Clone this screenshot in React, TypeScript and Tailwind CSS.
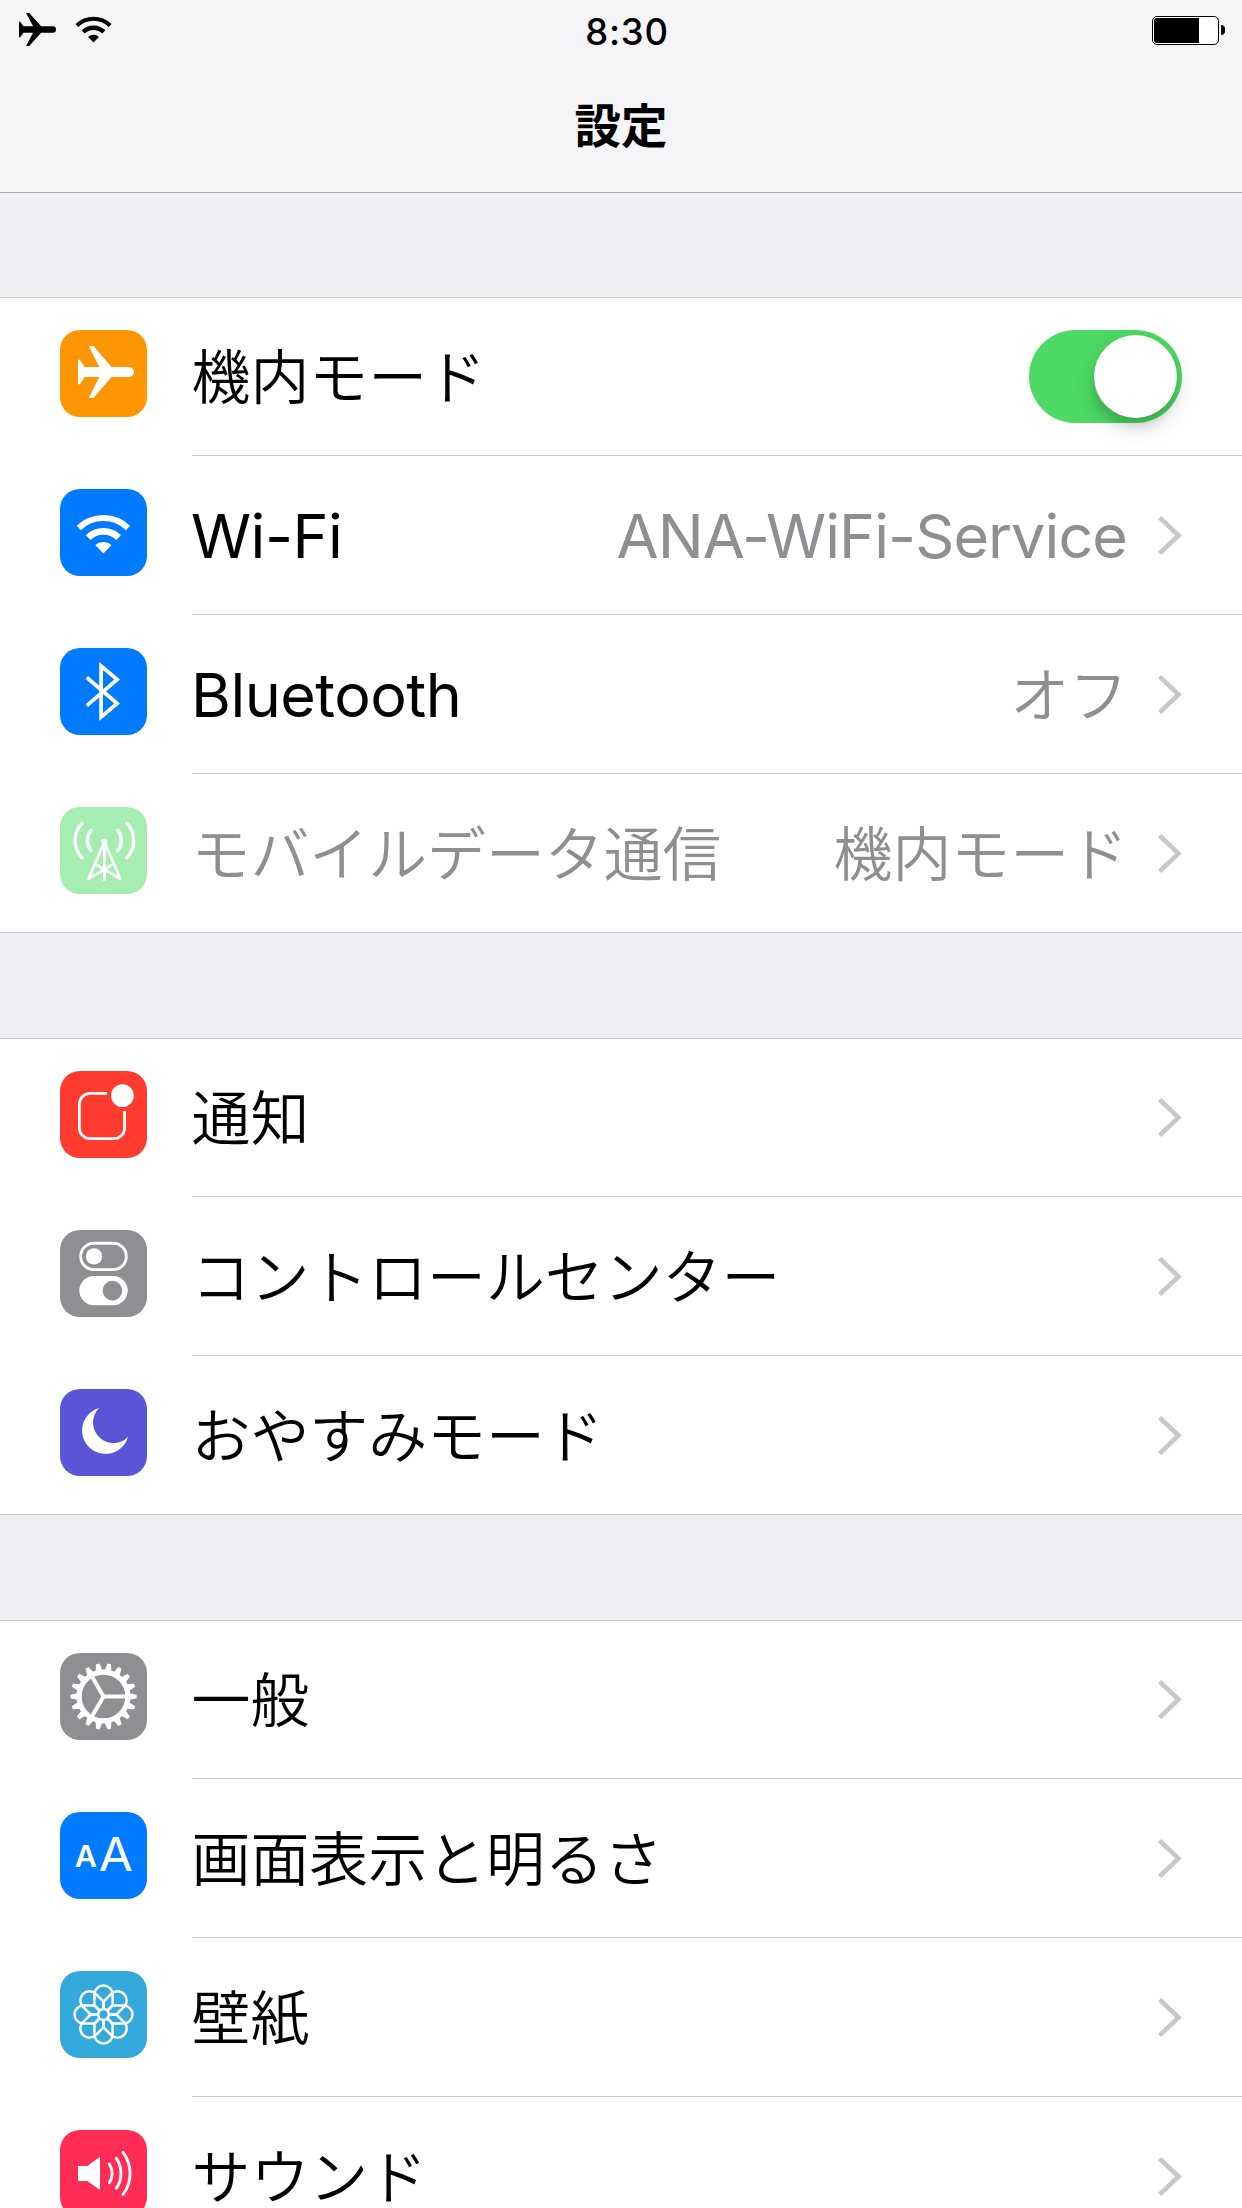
import type { ReactNode } from 'react';

type Row = {
    icon: ReactNode;
    color: string;
    label: string;
    value?: string;
    toggle?: boolean;
    disabled?: boolean;
};

function PlaneShape() {
    return (
        <path d="M18 29.7h1.8l4.9 7.3h14.6L28.7 16h4.8l18 21H69a5 5 0 0 1 0 10H51.5l-18 21h-4.8l10.6-21H24.7l-4.9 7.3H18z" />
    );
}

function WifiShape() {
    return (
        <>
            <path d="M18.8 39a35.3 35.3 0 0 1 49.2 0" fill="none" stroke="currentColor" strokeWidth="6" />
            <path d="M28.1 48.6a22 22 0 0 1 30.6 0" fill="none" stroke="currentColor" strokeWidth="6.6" />
            <path d="M43.4 64.4L35.4 56.2a11.3 11.3 0 0 1 16 0z" />
        </>
    );
}

function BluetoothShape() {
    return (
        <path
            d="M26.8 29.5L57.2 55.5L41.1 69V18L57.2 31.5L26.8 57.7"
            fill="none"
            stroke="currentColor"
            strokeWidth="3.7"
        />
    );
}

function AntennaShape() {
    return (
        <g fill="none" stroke="currentColor" strokeWidth="3.4" strokeLinecap="round">
            <path d="M22 16.2a25 25 0 0 0 0 34.6M66.8 16.2a25 25 0 0 1 0 34.6" />
            <path d="M30.9 23.4a16.5 16.5 0 0 0 0 20.2M57.9 23.4a16.5 16.5 0 0 1 0 20.2" />
            <path d="M44.4 35L28.5 71.8M44.4 35l15.9 36.8M36.8 57.8l23.5 14M52 57.8L28.5 71.8" strokeWidth="2.7" />
            <path d="M44.4 35v38.8" strokeWidth="2.9" strokeLinecap="butt" />
            <circle cx="44.4" cy="34.8" r="3" fill="currentColor" stroke="none" />
        </g>
    );
}

function NotificationShape() {
    return (
        <>
            <path
                d="M47 22.4H30a10.6 10.6 0 0 0-10.6 10.6V57a10.6 10.6 0 0 0 10.6 10.6H54A10.6 10.6 0 0 0 64.6 57V40"
                fill="none"
                stroke="currentColor"
                strokeWidth="2.8"
            />
            <circle cx="62.4" cy="24.6" r="11.4" />
        </>
    );
}

function ControlShape() {
    return (
        <>
            <rect x="20.7" y="13.2" width="45.6" height="26.4" rx="13.2" fill="none" stroke="currentColor" strokeWidth="2.9" />
            <circle cx="34" cy="26.4" r="8.2" />
            <rect x="19.3" y="46" width="48.4" height="29.2" rx="14.6" />
            <circle cx="52.4" cy="60.6" r="9.8" fill="#8e8e93" />
        </>
    );
}

function MoonShape() {
    return <path d="M39 19A23.4 23.4 0 1 0 68 48A20.4 20.4 0 0 1 39 19z" />;
}

function GearShape() {
    const teeth = Array.from({ length: 18 }, (_, i) => i * 20);
    return (
        <>
            <circle cx="43.5" cy="43.5" r="24.4" fill="none" stroke="currentColor" strokeWidth="5.2" />
            {teeth.map((a) => (
                <path key={a} d="M69 40L76.6 41.7v3.6L69 47z" transform={`rotate(${a} 43.5 43.5)`} />
            ))}
            {[0, 120, 240].map((a) => (
                <path key={a} d="M42.5 41.5H67v4H42.5z" transform={`rotate(${a} 43.5 43.5)`} />
            ))}
        </>
    );
}

function TextSizeShape() {
    return (
        <g className="font-['Inter',sans-serif]">
            <text x="25.8" y="55" textAnchor="middle" fontSize="30.5" fontWeight="600">A</text>
            <text x="55.8" y="59" textAnchor="middle" fontSize="46.5" fontWeight="400" textLength="34" lengthAdjust="spacingAndGlyphs">A</text>
        </g>
    );
}

function FlowerShape() {
    const petals = Array.from({ length: 8 }, (_, i) => i * 45);
    return (
        <g fill="none" stroke="currentColor" strokeWidth="2.5">
            {petals.map((a) => (
                <path key={a} d="M40 40L34.4 34.4V23.6a9.1 9.1 0 0 1 18.2 0V34.4L47 40" transform={`rotate(${a} 43.5 43.5)`} />
            ))}
            <circle cx="43.5" cy="43.5" r="5.4" />
        </g>
    );
}

function SpeakerShape() {
    return (
        <>
            <path d="M18 36h9.3L40 26.7V60L27.3 51H18z" />
            <g fill="none" stroke="currentColor" strokeWidth="2.9" strokeLinecap="round">
                <path d="M49.3 34a17 17 0 0 1 0 18.8" />
                <path d="M56.3 28.4a26.5 26.5 0 0 1 0 30" />
                <path d="M63 22.3a35 35 0 0 1 0 42.2" />
            </g>
        </>
    );
}

const groups: Row[][] = [
    [
        { icon: <PlaneShape />, color: 'bg-[#ff9500]', label: '機内モード', toggle: true },
        { icon: <WifiShape />, color: 'bg-[#007aff]', label: 'Wi-Fi', value: 'ANA-WiFi-Service' },
        { icon: <BluetoothShape />, color: 'bg-[#007aff]', label: 'Bluetooth', value: 'オフ' },
        { icon: <AntennaShape />, color: 'bg-[#a6edb1]', label: 'モバイルデータ通信', value: '機内モード', disabled: true },
    ],
    [
        { icon: <NotificationShape />, color: 'bg-[#ff3b30]', label: '通知' },
        { icon: <ControlShape />, color: 'bg-[#8e8e93]', label: 'コントロールセンター' },
        { icon: <MoonShape />, color: 'bg-[#5856d6]', label: 'おやすみモード' },
    ],
    [
        { icon: <GearShape />, color: 'bg-[#8e8e93]', label: '一般' },
        { icon: <TextSizeShape />, color: 'bg-[#007aff]', label: '画面表示と明るさ' },
        { icon: <FlowerShape />, color: 'bg-[#34aadc]', label: '壁紙' },
        { icon: <SpeakerShape />, color: 'bg-[#ff2d55]', label: 'サウンド' },
    ],
];

const isLatin = (text: string) => /^[\x20-\x7e]+$/.test(text);

// Latin and Japanese runs need different faces, sizes and baselines
function Label({ text, latinClass }: { text: string; latinClass: string }) {
    if (isLatin(text)) {
        return (
            <span className={`pt-0.5 font-['Inter',sans-serif] text-[61px] leading-none ${latinClass}`}>{text}</span>
        );
    }
    return (
        <span className="-mr-px -ml-[0.5px] pb-[5px] font-['Noto_Sans_CJK_JP',sans-serif] text-[58.9px] leading-[59px] font-[350]">
            {text}
        </span>
    );
}

function Toggle() {
    return (
        <div className="flex h-[93px] w-[153px] justify-end rounded-full bg-[#4cd964] p-[5px]">
            <div className="h-[83px] w-[83px] rounded-full bg-white shadow-[0_9px_24px_rgba(0,0,0,0.15),0_9px_8px_rgba(0,0,0,0.1)]" />
        </div>
    );
}

function SettingsRow({ row, last }: { row: Row; last: boolean }) {
    return (
        <div className="flex h-[159px]">
            <div className="w-48 shrink-0 pt-[33px] pl-[60px]">
                <div className={`h-[87px] w-[87px] rounded-[20px] text-white ${row.color}`}>
                    <svg viewBox="0 0 87 87" className="block h-full w-full" fill="currentColor">
                        {row.icon}
                    </svg>
                </div>
            </div>
            <div
                className={`flex flex-1 items-center border-b pr-[60px] ${last ? 'border-transparent' : 'border-[#c8c7cc]'} ${row.disabled ? 'text-[#8f8f8f]' : 'text-black'
                    }`}
            >
                <Label text={row.label} latinClass="-ml-px tracking-[-0.5px]" />
                <div className={`ml-auto flex items-center ${row.disabled ? '' : 'text-[#8e8e93]'}`}>
                    {row.value && <Label text={row.value} latinClass="tracking-[-0.9px]" />}
                    {row.toggle ? (
                        <Toggle />
                    ) : (
                        <svg viewBox="0 0 24 39" className="ml-[31px] h-[39px] w-6 text-[#c7c7cc]" fill="none">
                            <path d="M1.6 1.6L20.5 19.5L1.6 37.4" stroke="currentColor" strokeWidth="4.6" />
                        </svg>
                    )}
                </div>
            </div>
        </div>
    );
}

export default function App() {
    return (
        <div className="h-[2208px] w-[1242px] overflow-hidden bg-[#efeff4] text-black">
            <header className="h-[193px] border-b border-[#a7a7ab] bg-[#f5f5f7]">
                <div className="flex h-[60px] items-center justify-between pr-[17px] pl-[19px]">
                    <div className="flex w-[73px] items-center gap-[19px]">
                        <svg viewBox="18 16 56 52" preserveAspectRatio="none" className="-mt-px h-[33px] w-[37px] shrink-0" fill="currentColor">
                            <PlaneShape />
                        </svg>
                        <svg viewBox="16 25.5 54.8 39" className="-mt-px h-[27px] w-[37px] shrink-0" fill="currentColor">
                            <WifiShape />
                        </svg>
                    </div>
                    <div className="pt-1 pl-2.5 font-['Inter',sans-serif] text-[36.5px] leading-none font-medium tracking-[0.8px]">
                        8:30
                    </div>
                    <div className="flex w-[73px] items-center gap-0.5">
                        <div className="h-[29px] w-[67px] rounded-[5px] border border-black bg-white p-px">
                            <div className="h-full w-[45px] rounded-l-[3px] bg-black" />
                        </div>
                        <div className="h-2.5 w-1 rounded-r-full bg-black" />
                    </div>
                </div>
                <h1 className="mt-10 text-center font-['Noto_Sans_CJK_JP',sans-serif] text-[46.5px] leading-none font-bold">
                    設定
                </h1>
            </header>
            <main className="flex flex-col gap-[105px] pt-[104px]">
                {groups.map((rows, i) => (
                    <section key={i} className="bg-white shadow-[inset_0_1px_0_#c8c7cc,inset_0_-1px_0_#c8c7cc]">
                        {rows.map((row, j) => (
                            <SettingsRow key={row.label} row={row} last={j === rows.length - 1} />
                        ))}
                    </section>
                ))}
            </main>
        </div>
    );
}
